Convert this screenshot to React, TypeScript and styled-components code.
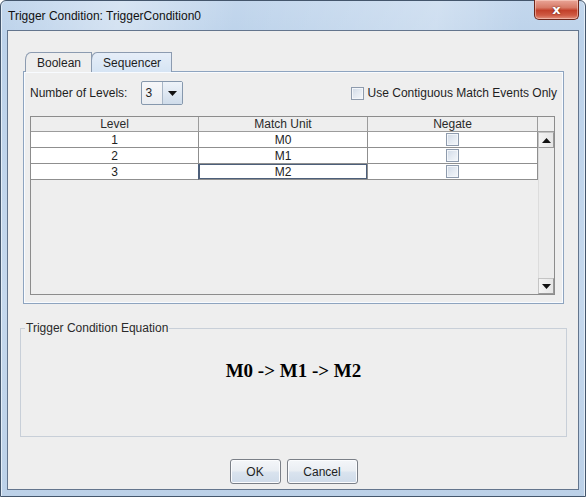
import styled, { createGlobalStyle } from 'styled-components'

const GlobalStyle = createGlobalStyle`
  html, body {
    margin: 0;
    padding: 0;
  }
  body {
    width: 586px;
    height: 497px;
    overflow: hidden;
    background: #ffffff;
    font-family: 'Liberation Sans', Arial, sans-serif;
  }
`

const Window = styled.div`
  box-sizing: border-box;
  width: 586px;
  height: 497px;
  display: flex;
  flex-direction: column;
  padding: 0 6px 6px 6px;
  border: 1px solid #44566c;
  border-radius: 6px 6px 0 0;
  background: linear-gradient(to bottom, #c3d7ed 0%, #bcd2ea 8%, #c5d8ed 60%, #bcd1e8 100%);
  box-shadow: inset 1px 0 0 #e4eef8, inset -1px 0 0 #e4eef8;
`

const TitleBar = styled.div`
  height: 29px;
  display: flex;
  align-items: flex-start;
  background: linear-gradient(100deg, transparent 0%, rgba(255, 255, 255, 0.35) 20%, transparent 40%, rgba(255, 255, 255, 0.25) 75%, transparent 90%);
`

const Title = styled.span`
  margin-top: 8px;
  padding-left: 1px;
  font-size: 12px;
  color: #111;
`

const CloseButton = styled.div`
  margin-left: auto;
  margin-top: -1px;
  width: 45px;
  height: 20px;
  box-sizing: border-box;
  display: flex;
  align-items: center;
  justify-content: center;
  border: 1px solid #6e261a;
  border-top: none;
  border-radius: 0 0 5px 5px;
  background: linear-gradient(to bottom, #e9a597 0%, #d77a67 40%, #c2402a 55%, #cf5a43 80%, #e1907d 100%);
  box-shadow: inset 0 0 0 1px rgba(255, 220, 210, 0.5);
  color: #fff;
  font-size: 13px;
  font-weight: bold;
  font-family: 'DejaVu Sans', sans-serif;
  text-shadow: 0 0 2px #5a1a10;
`

const Body = styled.div`
  flex: 1;
  display: flex;
  flex-direction: column;
  padding: 21px 11px 5px 12px;
  background: #eeeeee;
  border: 1px solid #63758d;
`

const TabPane = styled.div`
  margin: 0 3px;
  display: flex;
  flex-direction: column;
`

const TabStrip = styled.div`
  display: flex;
  padding-left: 2px;
  height: 20px;
  margin-bottom: -1px;
  position: relative;
  z-index: 1;
`

const Tab = styled.div<{ $active?: boolean }>`
  box-sizing: border-box;
  height: 20px;
  padding: 0 10px 0 11px;
  display: flex;
  align-items: center;
  font-size: 12px;
  color: #1e1e1e;
  border: 1px solid #8c9bb0;
  border-bottom: none;
  border-top-left-radius: 6px 8px;
  margin-right: -1px;
  background: ${p => (p.$active ? 'linear-gradient(to bottom, #e6eef8, #d6e4f4)' : '#eeeeee')};
`

const TabPanel = styled.div`
  box-sizing: border-box;
  height: 233px;
  display: flex;
  flex-direction: column;
  gap: 11px;
  padding: 9px 8px 8px 6px;
  border: 1px solid #8ea4bf;
  box-shadow: inset 0 0 0 1px #f8fbff;
`

const TopRow = styled.div`
  height: 24px;
  display: flex;
  align-items: center;
  margin-right: -2px;
`

const Label = styled.span`
  font-size: 12px;
  color: #1e1e1e;
`

const Combo = styled.div`
  margin-left: 14px;
  width: 42px;
  height: 24px;
  box-sizing: border-box;
  display: flex;
  border: 1px solid #8698ad;
  border-radius: 2px;
  background: linear-gradient(to bottom, #f6f7f9, #eaedf1);
`

const ComboValue = styled.span`
  flex: 1;
  display: flex;
  align-items: center;
  padding-left: 3px;
  font-size: 12px;
  color: #1e1e1e;
  border-right: 1px solid #a8b6c6;
`

const ComboArrow = styled.span`
  width: 19px;
  display: flex;
  align-items: center;
  justify-content: center;
  background: linear-gradient(to bottom, #eef3f9 0%, #dfe8f2 50%, #cfdcea 100%);
`

const CheckOption = styled.label`
  margin-left: auto;
  display: flex;
  align-items: center;
  gap: 4px;
  font-size: 12px;
  color: #1e1e1e;
`

const CheckBox = styled.span`
  box-sizing: border-box;
  display: inline-block;
  width: 13px;
  height: 13px;
  border: 1px solid #8e9bad;
  background: linear-gradient(135deg, #cfd9e6 0%, #e4eaf2 50%, #f4f7fb 100%);
  box-shadow: inset 0 0 0 1px #f3f6fa;
`

const ScrollPane = styled.div`
  height: 178px;
  display: flex;
  border: 1px solid #8c8c8c;
  background: #eeeeee;
`

const Viewport = styled.div`
  flex: 1;
  display: flex;
  flex-direction: column;
`

const Grid = styled.div`
  display: grid;
  grid-template-columns: 168px 169px 1fr;
`

const HeaderCell = styled.div`
  height: 14px;
  display: flex;
  align-items: center;
  justify-content: center;
  font-size: 12px;
  color: #2a2a2a;
  background: #eeeeee;
  border-right: 1px solid #9c9c9c;
  border-bottom: 1px solid #9c9c9c;
`

const Cell = styled.div<{ $focused?: boolean }>`
  box-sizing: border-box;
  height: 16px;
  display: flex;
  align-items: center;
  justify-content: center;
  font-size: 12px;
  color: #222;
  background: #fff;
  border-right: 1px solid #8f8f8f;
  border-bottom: 1px solid #8f8f8f;
  ${p => p.$focused && 'box-shadow: inset 0 0 0 1px #4d5f7a; border-left: 1px solid #4d5f7a; margin-left: -1px;'}
`

const ScrollBar = styled.div`
  width: 16px;
  display: flex;
  flex-direction: column;
`

const Corner = styled.div`
  height: 14px;
  border-bottom: 1px solid #9c9c9c;
  background: #eeeeee;
`

const Track = styled.div`
  flex: 1;
  background: #ececec;
  border-left: 1px solid #dcdcdc;
`

const ArrowButton = styled.div`
  box-sizing: border-box;
  height: 16px;
  display: flex;
  align-items: center;
  justify-content: center;
  background: linear-gradient(to right, #f4f4f4, #e6e6e6);
  border: 1px solid #c4c4c4;
  border-right-color: #9a9a9a;
  border-bottom-color: #9a9a9a;
`

const Group = styled.fieldset`
  margin: 18px 0 0 0;
  padding: 0;
  height: 115px;
  box-sizing: border-box;
  border: 1px solid #c8cfd8;
  display: flex;
  justify-content: center;
`

const Legend = styled.legend`
  margin-left: 4px;
  padding: 0 1px;
  font-size: 12px;
  line-height: 12px;
  color: #2a2a2a;
`

const Equation = styled.div`
  padding-top: 26px;
  font-family: 'Liberation Serif', 'Times New Roman', serif;
  font-weight: bold;
  font-size: 19px;
  color: #000;
  white-space: pre;
`

const ButtonRow = styled.div`
  margin-top: 22px;
  display: flex;
  justify-content: center;
  gap: 6px;
`

const Button = styled.button<{ $width: number }>`
  width: ${p => p.$width}px;
  height: 25px;
  padding: 0;
  font-family: 'Liberation Sans', Arial, sans-serif;
  font-size: 12px;
  color: #222;
  border: 1px solid #7a7f87;
  border-radius: 3px;
  background: linear-gradient(to bottom, #f4f6f9 0%, #eaeef3 45%, #d9e3ee 55%, #cfdbe9 100%);
  box-shadow: inset 0 0 0 1px #fbfcfe;
`

const Triangle = ({ up }: { up?: boolean }) => (
  <svg width="9" height="5" viewBox="0 0 9 5">
    <path d={up ? 'M0 5 L4.5 0 L9 5 Z' : 'M0 0 L9 0 L4.5 5 Z'} fill="#111" />
  </svg>
)

const rows = [
  { level: '1', unit: 'M0' },
  { level: '2', unit: 'M1' },
  { level: '3', unit: 'M2' },
]

const App = () => (
  <>
    <GlobalStyle />
    <Window>
      <TitleBar>
        <Title>Trigger Condition: TriggerCondition0</Title>
        <CloseButton>x</CloseButton>
      </TitleBar>
      <Body>
        <TabPane>
          <TabStrip>
            <Tab>Boolean</Tab>
            <Tab $active>Sequencer</Tab>
          </TabStrip>
          <TabPanel>
            <TopRow>
              <Label>Number of Levels:</Label>
              <Combo>
                <ComboValue>3</ComboValue>
                <ComboArrow><Triangle /></ComboArrow>
              </Combo>
              <CheckOption>
                <CheckBox />
                Use Contiguous Match Events Only
              </CheckOption>
            </TopRow>
            <ScrollPane>
              <Viewport>
                <Grid>
                  <HeaderCell>Level</HeaderCell>
                  <HeaderCell>Match Unit</HeaderCell>
                  <HeaderCell>Negate</HeaderCell>
                  {rows.map((r, i) => (
                    <>
                      <Cell key={'l' + i}>{r.level}</Cell>
                      <Cell key={'u' + i} $focused={i === 2}>{r.unit}</Cell>
                      <Cell key={'n' + i}><CheckBox /></Cell>
                    </>
                  ))}
                </Grid>
              </Viewport>
              <ScrollBar>
                <Corner />
                <ArrowButton><Triangle up /></ArrowButton>
                <Track />
                <ArrowButton><Triangle /></ArrowButton>
              </ScrollBar>
            </ScrollPane>
          </TabPanel>
        </TabPane>
        <Group>
          <Legend>Trigger Condition Equation</Legend>
          <Equation>M0 -&gt; M1 -&gt; M2</Equation>
        </Group>
        <ButtonRow>
          <Button $width={51}>OK</Button>
          <Button $width={71}>Cancel</Button>
        </ButtonRow>
      </Body>
    </Window>
  </>
)

export default App
